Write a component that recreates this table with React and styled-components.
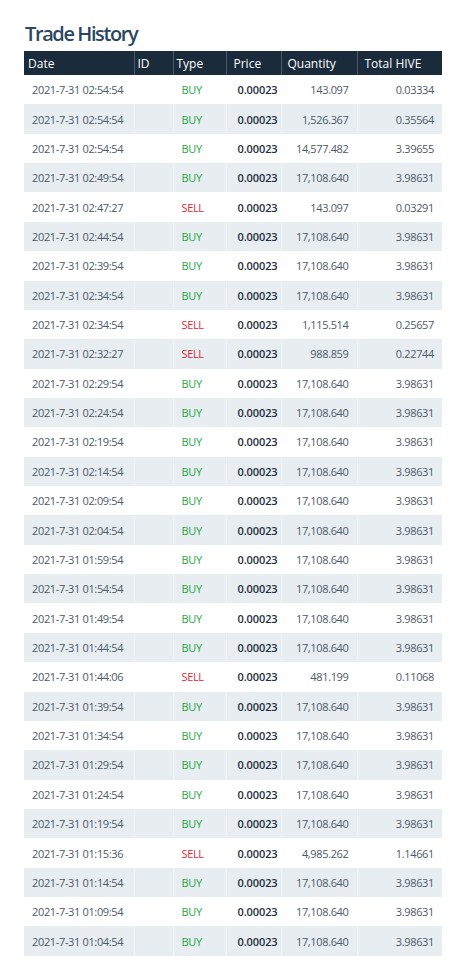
import React from "react";
import styled, { createGlobalStyle } from "styled-components";

const GlobalStyle = createGlobalStyle`
  body {
    margin: 0;
    background: #fff;
    font-family: "Open Sans", "Noto Sans", sans-serif;
  }
`;

const Page = styled.div`
  padding: 20px 11px 0 24px;
`;

const Title = styled.h2`
  margin: 0 0 3px 1px;
  font-size: 20px;
  font-weight: 600;
  letter-spacing: -1.4px;
  line-height: 28px;
  color: #2a4661;
`;

const Table = styled.table`
  width: 418px;
  border-collapse: collapse;
  table-layout: fixed;
  font-size: 11px;
`;

const Th = styled.th`
  background: #1a2b3c;
  color: #fff;
  font-weight: 400;
  font-size: 12px;
  text-align: left;
  height: 24px;
  padding: 0 4px 0 ${(p) => p.$pad || 4}px;
  border-right: 1px solid #4a5a6a;
  &:last-child {
    border-right: none;
  }
`;

const Row = styled.tr`
  background: ${(p) => (p.$striped ? "#e8edf1" : "#fff")};
`;

const Td = styled.td`
  height: 29.37px;
  padding: 0 8px 0 ${(p) => p.$pad || 8}px;
  box-sizing: border-box;
  color: ${(p) => p.$color || "#4c5a69"};
  font-weight: ${(p) => (p.$bold ? 600 : 400)};
  letter-spacing: ${(p) => (p.$bold ? "-0.1px" : "-0.35px")};
  text-align: ${(p) => p.$align || "left"};
  border-right: 1px solid ${(p) => (p.$striped ? "#f1f4f7" : "#fff")};
  white-space: nowrap;
  &:last-child {
    border-right: none;
  }
`;

const trades = [
  ["02:54:54", "BUY", "143.097", "0.03334"],
  ["02:54:54", "BUY", "1,526.367", "0.35564"],
  ["02:54:54", "BUY", "14,577.482", "3.39655"],
  ["02:49:54", "BUY", "17,108.640", "3.98631"],
  ["02:47:27", "SELL", "143.097", "0.03291"],
  ["02:44:54", "BUY", "17,108.640", "3.98631"],
  ["02:39:54", "BUY", "17,108.640", "3.98631"],
  ["02:34:54", "BUY", "17,108.640", "3.98631"],
  ["02:34:54", "SELL", "1,115.514", "0.25657"],
  ["02:32:27", "SELL", "988.859", "0.22744"],
  ["02:29:54", "BUY", "17,108.640", "3.98631"],
  ["02:24:54", "BUY", "17,108.640", "3.98631"],
  ["02:19:54", "BUY", "17,108.640", "3.98631"],
  ["02:14:54", "BUY", "17,108.640", "3.98631"],
  ["02:09:54", "BUY", "17,108.640", "3.98631"],
  ["02:04:54", "BUY", "17,108.640", "3.98631"],
  ["01:59:54", "BUY", "17,108.640", "3.98631"],
  ["01:54:54", "BUY", "17,108.640", "3.98631"],
  ["01:49:54", "BUY", "17,108.640", "3.98631"],
  ["01:44:54", "BUY", "17,108.640", "3.98631"],
  ["01:44:06", "SELL", "481.199", "0.11068"],
  ["01:39:54", "BUY", "17,108.640", "3.98631"],
  ["01:34:54", "BUY", "17,108.640", "3.98631"],
  ["01:29:54", "BUY", "17,108.640", "3.98631"],
  ["01:24:54", "BUY", "17,108.640", "3.98631"],
  ["01:19:54", "BUY", "17,108.640", "3.98631"],
  ["01:15:36", "SELL", "4,985.262", "1.14661"],
  ["01:14:54", "BUY", "17,108.640", "3.98631"],
  ["01:09:54", "BUY", "17,108.640", "3.98631"],
  ["01:04:54", "BUY", "17,108.640", "3.98631"],
];

export default function App() {
  return (
    <Page>
      <GlobalStyle />
      <Title>Trade History</Title>
      <Table>
        <colgroup>
          <col style={{ width: 110 }} />
          <col style={{ width: 39 }} />
          <col style={{ width: 53 }} />
          <col style={{ width: 55 }} />
          <col style={{ width: 76 }} />
          <col style={{ width: 85 }} />
        </colgroup>
        <thead>
          <tr>
            <Th>Date</Th>
            <Th $pad={3}>ID</Th>
            <Th $pad={3}>Type</Th>
            <Th $pad={7}>Price</Th>
            <Th $pad={6}>Quantity</Th>
            <Th $pad={7}>Total HIVE</Th>
          </tr>
        </thead>
        <tbody>
          {trades.map(([time, type, qty, total], i) => {
            const s = i % 2 === 1;
            return (
              <Row key={i} $striped={s}>
                <Td $striped={s}>2021-7-31 {time}</Td>
                <Td $striped={s}></Td>
                <Td $striped={s} $color={type === "BUY" ? "#25a73f" : "#e3253b"}>
                  {type}
                </Td>
                <Td $striped={s} $bold $pad={11} $color="#1d2d3d">
                  0.00023
                </Td>
                <Td $striped={s} $align="right">{qty}</Td>
                <Td $striped={s} $align="right">{total}</Td>
              </Row>
            );
          })}
        </tbody>
      </Table>
    </Page>
  );
}
